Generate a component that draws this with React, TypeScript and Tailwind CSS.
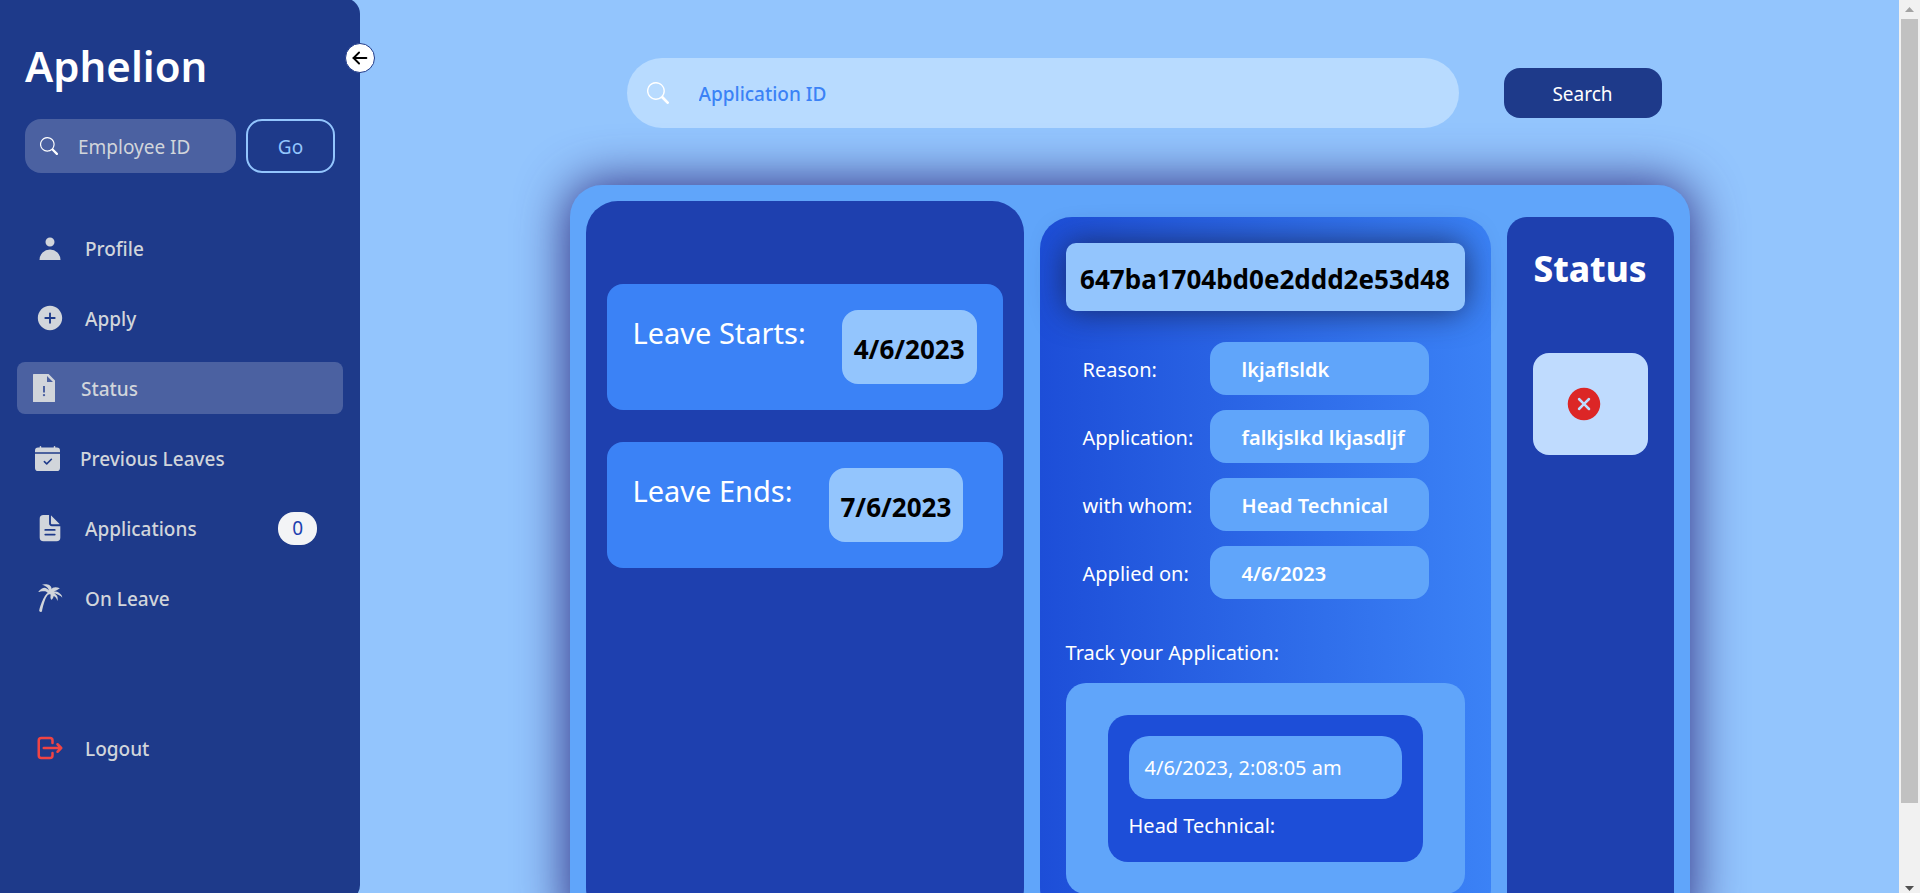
import type { ReactNode } from "react";
import { BsCalendarCheckFill, BsSearch } from "react-icons/bs";
import { GiPalmTree } from "react-icons/gi";
import { HiUser } from "react-icons/hi";
import { IoAddCircle, IoCloseCircle, IoDocumentText } from "react-icons/io5";
import { TbArrowLeft } from "react-icons/tb";

function FileAlertIcon() {
  return (
    <svg width="22" height="28" viewBox="0 0 22 28" fill="currentColor" aria-hidden="true">
      <path
        fillRule="evenodd"
        d="M.6 0H15.6L22 6.4V27.4a.6.6 0 0 1-.6.6H.6a.6.6 0 0 1-.6-.6V.6A.6.6 0 0 1 .6 0ZM14 2V8H20ZM10 12V18.5H12V12ZM11 19.9a1.2 1.2 0 1 0 0 2.4 1.2 1.2 0 0 0 0-2.4Z"
      />
    </svg>
  );
}

function LogoutIcon() {
  return (
    <svg
      width="30"
      height="30"
      viewBox="0 0 24 24"
      fill="none"
      stroke="currentColor"
      strokeWidth="2"
      strokeLinecap="round"
      strokeLinejoin="round"
      aria-hidden="true"
    >
      <path d="M14 8V6a2 2 0 0 0-2-2H5a2 2 0 0 0-2 2v12a2 2 0 0 0 2 2h7a2 2 0 0 0 2-2v-2" />
      <path d="M7 12h14l-3-3m0 6 3-3" />
    </svg>
  );
}

type NavItemProps = {
  icon: ReactNode;
  label: string;
  spacing?: string;
  active?: boolean;
  badge?: string;
};

function NavItem({ icon, label, spacing = "pl-[18px] gap-5", active, badge }: NavItemProps) {
  return (
    <a
      href="#"
      aria-current={active ? "page" : undefined}
      className={`flex h-[52px] items-center rounded-lg pr-[26px] text-[19px] font-medium ${spacing} ${active ? "bg-white/20" : ""}`}
    >
      {icon}
      <span className="pt-0.5">{label}</span>
      {badge && (
        <span className="ml-auto rounded-2xl bg-[#f3f4f6] px-[14px] text-[19px] leading-[33px] font-normal text-[#1e40af]">
          {badge}
        </span>
      )}
    </a>
  );
}

function Sidebar() {
  return (
    <aside className="relative -mt-0.5 -mb-2 w-[360px] shrink-0 rounded-r-2xl bg-[#1e3a8a] pt-10 text-[#d1d5db]">
      <button
        type="button"
        aria-label="Collapse sidebar"
        className="absolute top-[45px] -right-[15px] flex size-[30px] items-center justify-center rounded-full border border-[#1e3a8a] bg-white text-black"
      >
        <TbArrowLeft size={22} />
      </button>
      <h1 className="px-[25px] text-[42px] leading-[56px] font-semibold text-white">Aphelion</h1>
      <form className="mt-[25px] flex gap-[10px] px-[25px]" onSubmit={(e) => e.preventDefault()}>
        <label className="flex h-[54px] min-w-0 flex-1 items-center gap-5 rounded-2xl bg-white/20 pl-[15px]">
          <BsSearch size={18} className="shrink-0 text-white" />
          <input
            aria-label="Employee ID"
            placeholder="Employee ID"
            className="w-full min-w-0 bg-transparent pt-0.5 text-[19px] outline-none placeholder:text-[#d1d5db]"
          />
        </label>
        <button
          type="submit"
          className="w-[89px] rounded-2xl border-2 border-[#93c5fd] pt-0.5 text-[19px] text-[#93c5fd]"
        >
          Go
        </button>
      </form>
      <nav className="mx-[17px] mt-[49px] flex flex-col gap-[18px]">
        <NavItem icon={<HiUser size={30} />} label="Profile" />
        <NavItem icon={<IoAddCircle size={30} />} label="Apply" />
        <NavItem icon={<FileAlertIcon />} label="Status" spacing="pl-4 gap-[26px]" active />
        <NavItem icon={<BsCalendarCheckFill size={25} />} label="Previous Leaves" />
        <NavItem icon={<IoDocumentText size={30} />} label="Applications" badge="0" />
        <NavItem icon={<GiPalmTree size={30} />} label="On Leave" />
        <div className="pt-20">
          <NavItem
            icon={
              <span className="text-[#ef4444]">
                <LogoutIcon />
              </span>
            }
            label="Logout"
          />
        </div>
      </nav>
    </aside>
  );
}

function DateCard({ label, date }: { label: string; date: string }) {
  return (
    <div className="flex items-start gap-9 rounded-2xl bg-[#3b82f6] p-[26px]">
      <p className="text-[29px] leading-[45px] whitespace-nowrap text-white">{label}</p>
      <p className="rounded-2xl bg-[#93c5fd] px-3 pt-1 text-[26px] leading-[70px] font-bold text-black">{date}</p>
    </div>
  );
}

const details = [
  { label: "Reason:", value: "lkjaflsldk" },
  { label: "Application:", value: "falkjslkd lkjasdljf" },
  { label: "with whom:", value: "Head Technical" },
  { label: "Applied on:", value: "4/6/2023" },
];

function ApplicationCard() {
  return (
    <section className="mt-4 rounded-[32px] bg-linear-to-r/srgb from-[#1d4ed8] to-[#3b82f6] p-[26px] text-[20px] text-white">
      <h2 className="rounded-[10px] bg-[#93c5fd] pt-1 text-center text-[26px] leading-[64px] font-bold text-black shadow-[0_0_32px_0_#172554dd]">
        647ba1704bd0e2ddd2e53d48
      </h2>
      <dl className="mt-[31px] grid grid-cols-[127px_219px] gap-y-[15px] pl-[17px] leading-[51px]">
        {details.map(({ label, value }) => (
          <div key={label} className="contents">
            <dt className="pt-0.5">{label}</dt>
            <dd className="rounded-2xl bg-[#60a5fa] pt-0.5 pl-8 font-semibold">{value}</dd>
          </div>
        ))}
      </dl>
      <h3 className="mt-[39px] leading-[30px]">Track your Application:</h3>
      <div className="mt-[15px] rounded-[20px] bg-[#60a5fa] px-[42px] py-8">
        <div className="rounded-[20px] bg-[#1d4ed8] p-[21px]">
          <p className="rounded-[20px] bg-[#60a5fa] px-4 leading-[63px]">4/6/2023, 2:08:05 am</p>
          <p className="mt-3 leading-[30px]">Head Technical:</p>
        </div>
      </div>
    </section>
  );
}

function Scrollbar() {
  return (
    <div className="flex w-[21px] shrink-0 flex-col items-center bg-[#f1f1f1]" aria-hidden="true">
      <svg width="21" height="19" viewBox="0 0 21 19">
        <path d="M6 12h9l-4.500-5z" fill="#a3a3a3" />
      </svg>
      <div className="w-full grow px-0.5">
        <div className="h-[91.7%] bg-[#c1c1c1]" />
      </div>
      <svg width="21" height="19" viewBox="0 0 21 19">
        <path d="M6 12h9l-4.500 5z" fill="#505050" />
      </svg>
    </div>
  );
}

export default function App() {
  return (
    <div className="flex h-screen overflow-hidden bg-[#93c5fd] font-['Noto_Sans',sans-serif]">
      <Sidebar />
      <main className="flex min-w-0 flex-1 flex-col items-center overflow-hidden px-6 pt-[58px]">
        <form
          className="flex w-full max-w-[1120px] shrink-0 items-center gap-[45px] pr-7 pl-[57px]"
          onSubmit={(e) => e.preventDefault()}
        >
          <label className="flex h-[70px] min-w-0 flex-1 items-center gap-[30px] rounded-full bg-[#b8dbff] pl-5">
            <BsSearch size={22} className="shrink-0 text-white" />
            <input
              aria-label="Application ID"
              placeholder="Application ID"
              className="w-full min-w-0 bg-transparent pt-0.5 text-[19px] font-medium outline-none placeholder:text-[#3b82f6]"
            />
          </label>
          <button type="submit" className="h-[50px] w-[158px] rounded-2xl bg-[#1e3a8a] pt-0.5 text-[19px] text-white">
            Search
          </button>
        </form>
        <div className="mt-[57px] grid w-full max-w-[1120px] shrink-0 grid-cols-[438fr_451fr_167fr] gap-4 rounded-[32px] bg-[#60a5fa] p-4 shadow-[0_0_50px_2px_#312e81]">
          <section className="flex flex-col gap-8 rounded-[32px] bg-[#1e40af] px-[21px] pt-[83px]">
            <DateCard label="Leave Starts:" date="4/6/2023" />
            <DateCard label="Leave Ends:" date="7/6/2023" />
          </section>
          <ApplicationCard />
          <section className="mt-4 rounded-[20px] bg-[#1e40af] p-[26px]">
            <h2 className="text-center text-[35px] leading-[51px] font-extrabold text-white">Status</h2>
            <div className="mt-[59px] rounded-2xl bg-[#bfdbfe] p-[31px]">
              <IoCloseCircle size={40} className="text-[#dc2626]" title="Rejected" />
            </div>
          </section>
        </div>
      </main>
      <Scrollbar />
    </div>
  );
}
